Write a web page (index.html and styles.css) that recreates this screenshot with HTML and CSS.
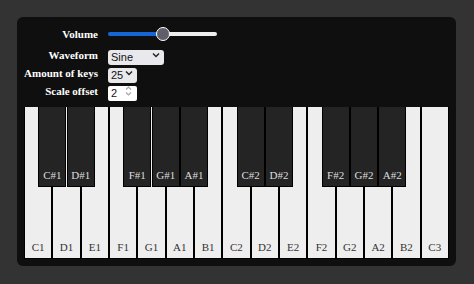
FILE: index.html
```html
<!DOCTYPE html>
<html lang="en">
<head>
    <meta charset="UTF-8">
    <meta name="viewport" content="width=device-width, initial-scale=1.0">
    <title>Piano</title>
    <link rel="stylesheet" href="styles.css">
</head>
<body>
    <main class="synth">
        <div class="controls">
            <label for="volume">Volume</label>
            <div class="control">
                <input type="range" id="volume" class="slider" min="0" max="100" value="50">
            </div>

            <label for="waveform">Waveform</label>
            <div class="control">
                <span class="select-wrap wide">
                    <select id="waveform">
                        <option>Sine</option>
                        <option>Square</option>
                        <option>Sawtooth</option>
                        <option>Triangle</option>
                    </select>
                    <svg class="chevron" width="8" height="6" viewBox="0 0 8 6"><path d="M1 1.5 L4 4.5 L7 1.5" fill="none" stroke="#222" stroke-width="1.4"/></svg>
                </span>
            </div>

            <label for="keys">Amount of keys</label>
            <div class="control">
                <span class="select-wrap narrow">
                    <select id="keys">
                        <option>13</option>
                        <option selected>25</option>
                        <option>37</option>
                    </select>
                    <svg class="chevron" width="8" height="6" viewBox="0 0 8 6"><path d="M1 1.5 L4 4.5 L7 1.5" fill="none" stroke="#222" stroke-width="1.4"/></svg>
                </span>
            </div>

            <label for="offset">Scale offset</label>
            <div class="control">
                <span class="number-wrap">
                    <input type="number" id="offset" value="2" min="0" max="6">
                    <svg class="spinner" width="7" height="12" viewBox="0 0 7 12"><path d="M1 4.5 L3.5 2 L6 4.5 M1 7.5 L3.5 10 L6 7.5" fill="none" stroke="#a8a8a8" stroke-width="1.2"/></svg>
                </span>
            </div>
        </div>

        <div class="keyboard">
            <div class="white-keys">
                <div class="key white">C1</div>
                <div class="key white">D1</div>
                <div class="key white">E1</div>
                <div class="key white">F1</div>
                <div class="key white">G1</div>
                <div class="key white">A1</div>
                <div class="key white">B1</div>
                <div class="key white">C2</div>
                <div class="key white">D2</div>
                <div class="key white">E2</div>
                <div class="key white">F2</div>
                <div class="key white">G2</div>
                <div class="key white">A2</div>
                <div class="key white">B2</div>
                <div class="key white">C3</div>
            </div>
            <div class="key black" style="left: 3.3333%">C#1</div>
            <div class="key black" style="left: 10%">D#1</div>
            <div class="key black" style="left: 23.3333%">F#1</div>
            <div class="key black" style="left: 30%">G#1</div>
            <div class="key black" style="left: 36.6667%">A#1</div>
            <div class="key black" style="left: 50%">C#2</div>
            <div class="key black" style="left: 56.6667%">D#2</div>
            <div class="key black" style="left: 70%">F#2</div>
            <div class="key black" style="left: 76.6667%">G#2</div>
            <div class="key black" style="left: 83.3333%">A#2</div>
        </div>
    </main>
</body>
</html>
```

FILE: styles.css
```css
* {
    margin: 0;
    padding: 0;
    box-sizing: border-box;
}

body {
    background-color: #333333;
    font-family: "Liberation Serif", "Times New Roman", serif;
    padding: 17px 18px 18px 17px;
    height: 284px;
}

.synth {
    background-color: #0f0f0f;
    border-radius: 6px;
    padding: 7px;
    height: 249px;
    display: flex;
    flex-direction: column;
}

/* controls */

.controls {
    display: grid;
    grid-template-columns: 74px auto;
    grid-template-rows: 20px 15px 15px 15px;
    column-gap: 10px;
    row-gap: 3px;
    margin-bottom: 9px;
}

.controls label {
    color: #fff;
    font-weight: bold;
    font-size: 11px;
    text-align: right;
    align-self: center;
}

.control {
    display: flex;
    align-items: center;
}

.slider {
    -webkit-appearance: none;
    appearance: none;
    width: 109px;
    height: 20px;
    background: transparent;
    outline: none;
}

.slider::-webkit-slider-runnable-track {
    height: 4px;
    border-radius: 2px;
    background: linear-gradient(to right, #1766d6 0%, #1766d6 50%, #eeeeee 50%, #eeeeee 100%);
}

.slider::-webkit-slider-thumb {
    -webkit-appearance: none;
    width: 14px;
    height: 14px;
    margin-top: -5px;
    border-radius: 50%;
    background: #5e5f6b;
    border: 1.5px solid #ffffff;
}

.select-wrap,
.number-wrap {
    position: relative;
    display: inline-block;
    height: 15px;
}

.select-wrap select {
    -webkit-appearance: none;
    appearance: none;
    height: 15px;
    border: none;
    border-radius: 3px;
    background-color: #e9e9ed;
    color: #111;
    font-family: "Liberation Sans", Arial, sans-serif;
    font-size: 11px;
    padding: 0 0 0 3px;
    outline: none;
}

.select-wrap.wide select {
    width: 56px;
}

.select-wrap.narrow select {
    width: 29px;
}

.chevron {
    position: absolute;
    right: 4px;
    top: 5px;
    pointer-events: none;
}

.number-wrap input {
    -webkit-appearance: none;
    appearance: textfield;
    width: 29px;
    height: 15px;
    border: none;
    border-radius: 2px;
    background-color: #ffffff;
    color: #111;
    font-family: "Liberation Sans", Arial, sans-serif;
    font-size: 11px;
    padding: 0 0 0 3px;
    outline: none;
}

.number-wrap input::-webkit-inner-spin-button,
.number-wrap input::-webkit-outer-spin-button {
    -webkit-appearance: none;
    margin: 0;
}

.spinner {
    position: absolute;
    right: 5px;
    top: 2px;
    pointer-events: none;
}

/* keyboard */

.keyboard {
    position: relative;
    flex: 1;
    background-color: #000;
}

.white-keys {
    display: flex;
    height: 100%;
}

.key {
    display: flex;
    align-items: flex-end;
    justify-content: center;
    font-size: 11px;
    padding-bottom: 5px;
}

.key.white {
    flex: 1;
    background-color: #eeeeee;
    color: #333;
    border: 1px solid #000;
    border-top: none;
}

.key.black {
    position: absolute;
    top: 0;
    width: 6.6667%;
    height: 80px;
    background-color: #242424;
    color: #dddddd;
    border: 1px solid #000;
    border-top: none;
}
```
